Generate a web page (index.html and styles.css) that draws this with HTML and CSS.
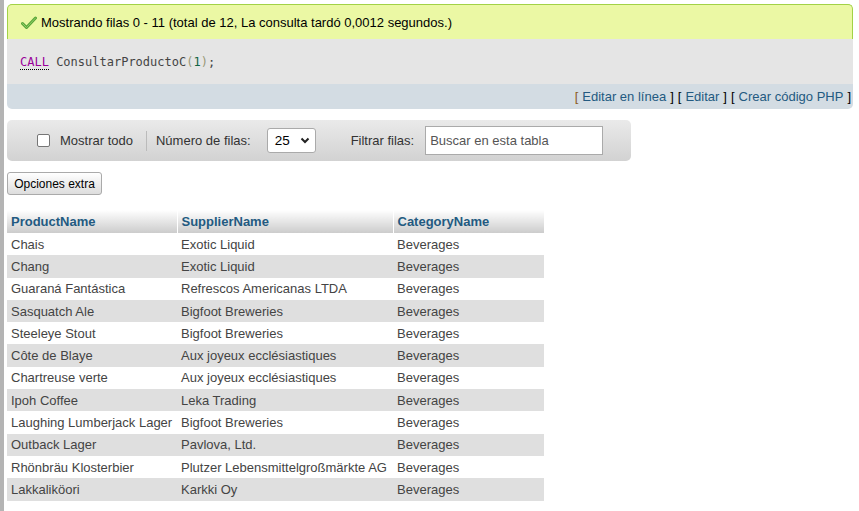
FILE: index.html
```html
<!DOCTYPE html>
<html lang="es">
<head>
<meta charset="utf-8">
<title>Resultado</title>
<link rel="stylesheet" href="styles.css">
</head>
<body>
<div class="page">
  <div class="stripe"></div>
  <div class="main">
    <div class="result">
      <div class="notice">
        <svg class="check" width="16" height="14" viewBox="0 0 16 14">
          <path d="M1.5 7.5 L5.5 11.5 L14.5 2" fill="none" stroke="#5aa53a" stroke-width="3" stroke-linecap="round" stroke-linejoin="round"/>
          <path d="M1.5 7.5 L5.5 11.5 L14.5 2" fill="none" stroke="#8fd36a" stroke-width="1" stroke-linecap="round" stroke-linejoin="round"/>
        </svg>
        <span>Mostrando filas 0 - 11 (total de 12, La consulta tardó 0,0012 segundos.)</span>
      </div>
      <div class="sql"><code><span class="kw">CALL</span> <span class="ident">ConsultarProductoC</span><span class="br">(</span><span class="num">1</span><span class="br">)</span><span class="ident">;</span></code></div>
      <div class="tools">
        <span class="bk">[</span> <a href="#">Editar en línea</a> <span class="bk2">]</span> <span class="bk2">[</span> <a href="#">Editar</a> <span class="bk2">]</span> <span class="bk2">[</span> <a href="#">Crear código PHP</a> <span class="bk2">]</span>
      </div>
    </div>

    <div class="navbar">
      <label class="showall"><span class="cb"></span>Mostrar todo</label>
      <span class="sep"></span>
      <span class="lbl">Número de filas:</span>
      <span class="select">25
        <svg width="10" height="7" viewBox="0 0 10 7"><path d="M1.5 1.5 L5 5 L8.5 1.5" fill="none" stroke="#222" stroke-width="2"/></svg>
      </span>
      <span class="lbl filter">Filtrar filas:</span>
      <span class="search">Buscar en esta tabla</span>
    </div>

    <div class="extra"><button class="btn">Opciones extra</button></div>

    <table class="data">
      <colgroup><col class="c1"><col class="c2"><col class="c3"></colgroup>
      <thead>
        <tr><th>ProductName</th><th>SupplierName</th><th class="last">CategoryName</th></tr>
      </thead>
      <tbody>
        <tr><td>Chais</td><td>Exotic Liquid</td><td>Beverages</td></tr>
        <tr><td>Chang</td><td>Exotic Liquid</td><td>Beverages</td></tr>
        <tr><td>Guaraná Fantástica</td><td>Refrescos Americanas LTDA</td><td>Beverages</td></tr>
        <tr><td>Sasquatch Ale</td><td>Bigfoot Breweries</td><td>Beverages</td></tr>
        <tr><td>Steeleye Stout</td><td>Bigfoot Breweries</td><td>Beverages</td></tr>
        <tr><td>Côte de Blaye</td><td>Aux joyeux ecclésiastiques</td><td>Beverages</td></tr>
        <tr><td>Chartreuse verte</td><td>Aux joyeux ecclésiastiques</td><td>Beverages</td></tr>
        <tr><td>Ipoh Coffee</td><td>Leka Trading</td><td>Beverages</td></tr>
        <tr><td>Laughing Lumberjack Lager</td><td>Bigfoot Breweries</td><td>Beverages</td></tr>
        <tr><td>Outback Lager</td><td>Pavlova, Ltd.</td><td>Beverages</td></tr>
        <tr><td>Rhönbräu Klosterbier</td><td>Plutzer Lebensmittelgroßmärkte AG</td><td>Beverages</td></tr>
        <tr><td>Lakkaliköori</td><td>Karkki Oy</td><td>Beverages</td></tr>
      </tbody>
    </table>
  </div>
</div>
</body>
</html>
```

FILE: styles.css
```css
html, body {
  margin: 0;
  padding: 0;
  background: #fff;
}
body {
  font-family: "Liberation Sans", Arial, sans-serif;
  font-size: 13px;
  color: #444;
}
.page {
  display: flex;
  min-height: 511px;
}
.stripe {
  width: 4px;
  flex: none;
  background: #b4b4b4;
}
.main {
  flex: 1;
  padding: 4px 6px 0 3px;
}
.result {
  display: flex;
  flex-direction: column;
}
.notice {
  display: flex;
  align-items: center;
  gap: 4px;
  height: 34px;
  padding: 0 0 0 13px;
  background: #ebf8a4;
  border: 1px solid #a2d246;
  border-bottom: none;
  border-radius: 5px 5px 0 0;
  color: #000;
  font-size: 13px;
}
.check {
  margin-top: 1px;
}
.sql {
  background: #e5e5e5;
  height: 45px;
  display: flex;
  align-items: center;
  padding-left: 13px;
}
.sql code {
  font-family: "DejaVu Sans Mono", monospace;
  font-size: 12px;
  color: #555;
}
.kw {
  color: #909;
  border-bottom: 1px dotted #000;
}
.ident { color: #444; }
.br { color: #997; }
.num { color: #164; }
.tools {
  background: #d3dce3;
  height: 25px;
  display: flex;
  align-items: center;
  justify-content: flex-end;
  gap: 4px;
  padding-right: 2px;
  border-radius: 0 0 5px 5px;
  color: #000;
  font-size: 13px;
}
.tools a {
  color: #235a81;
  text-decoration: none;
}
.bk { color: #8a5a1c; }
.navbar {
  margin-top: 11px;
  width: 624px;
  height: 41px;
  display: flex;
  align-items: center;
  background: linear-gradient(#eaeaea, #d2d2d2);
  border-radius: 5px;
  font-size: 13px;
}
.showall {
  display: flex;
  align-items: center;
  color: #333;
  padding-left: 30px;
}
.cb {
  width: 11px;
  height: 11px;
  border: 1px solid #767676;
  border-radius: 2px;
  background: #fff;
  margin-right: 10px;
}
.sep {
  width: 1px;
  height: 20px;
  background: #bbb;
  margin: 0 9px 0 13px;
}
.lbl {
  color: #333;
}
.select {
  margin-left: 16px;
  width: 49px;
  height: 25px;
  box-sizing: border-box;
  border: 1px solid #aaa;
  border-radius: 3px;
  background: #fff;
  display: flex;
  align-items: center;
  justify-content: space-between;
  padding: 0 5px 0 7px;
  color: #000;
  font-size: 13.5px;
}
.filter {
  margin-left: 35px;
}
.search {
  margin-left: 11px;
  width: 178px;
  height: 29px;
  box-sizing: border-box;
  border: 1px solid #aaa;
  background: #fff;
  display: flex;
  align-items: center;
  padding-left: 4px;
  color: #555;
}
.extra {
  margin-top: 11px;
}
.btn {
  font-family: "Liberation Sans", Arial, sans-serif;
  font-size: 12px;
  color: #000;
  height: 23px;
  width: 95px;
  padding: 0;
  border: 1px solid #aaa;
  border-radius: 3px;
  background: linear-gradient(#fff, #ddd);
}
.data {
  margin-top: 15px;
  border-collapse: collapse;
  table-layout: fixed;
  width: 537px;
  font-size: 13px;
}
.data col.c1 { width: 170px; }
.data col.c2 { width: 216px; }
.data col.c3 { width: 151px; }
.data th {
  text-align: left;
  font-weight: bold;
  color: #235a81;
  background: linear-gradient(#fff, #ccc);
  height: 23px;
  padding: 0 4px;
  border-right: 1px solid #fff;
}
.data th.last { border-right: none; }
.data td {
  height: 22.3px;
  padding: 0 4px;
  color: #444;
  white-space: nowrap;
  overflow: hidden;
}
.data tbody tr:nth-child(even) td {
  background: #dfdfdf;
}
```
